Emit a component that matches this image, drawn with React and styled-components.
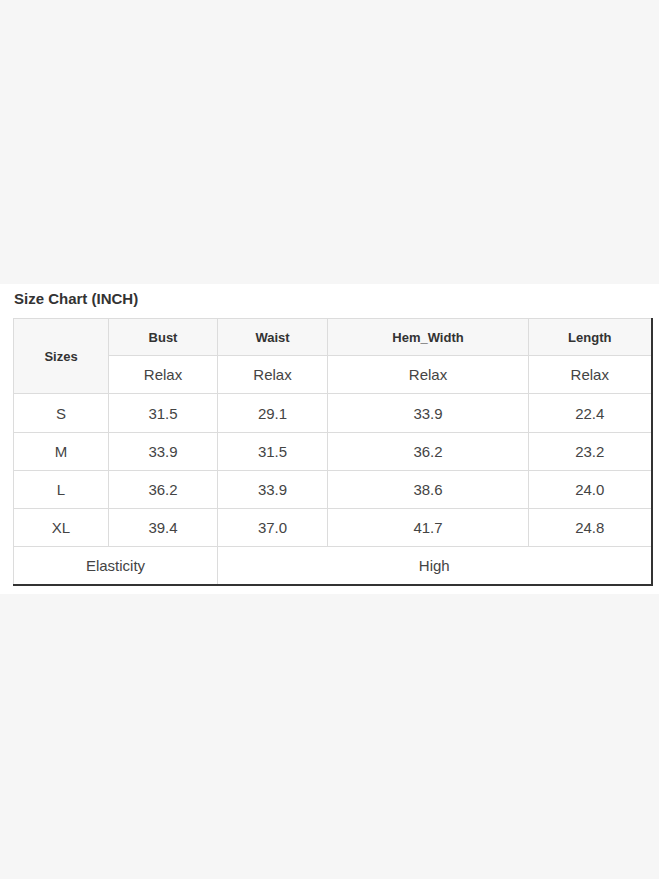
import React from "react";
import styled, { createGlobalStyle } from "styled-components";

const Global = createGlobalStyle`
  html, body { margin: 0; padding: 0; background: #f6f6f6; }
  body { font-family: "Liberation Sans", Arial, sans-serif; }
`;

const Page = styled.div`
  height: 879px;
  display: flex;
  flex-direction: column;
  padding-top: 284px;
  box-sizing: border-box;
`;

const Panel = styled.section`
  background: #fff;
  height: 310px;
  box-sizing: border-box;
  padding: 5px 0 0 13px;
`;

const Title = styled.h2`
  margin: 0 0 10px 1px;
  font-size: 15px;
  line-height: 19px;
  font-weight: bold;
  color: #333;
`;

const Table = styled.table`
  border-collapse: collapse;
  table-layout: fixed;
  width: 638px;
  border-right: 2px solid #333;
  border-bottom: 2px solid #333;
  color: #444;
`;

const Cell = styled.td`
  border: 1px solid #dcdcdc;
  text-align: center;
  padding: 0;
  height: ${(p) => p.$h || 38}px;
  font-size: ${(p) => (p.$head ? 13 : 15)}px;
  font-weight: ${(p) => (p.$head ? "bold" : "normal")};
  color: ${(p) => (p.$head ? "#333" : "#444")};
  background: ${(p) => (p.$shade ? "#f7f7f7" : "#fff")};
  box-sizing: border-box;
`;

const widths = [95, 109, 110, 201, 123];
const cols = ["Bust", "Waist", "Hem_Width", "Length"];
const rows = [
  ["S", "31.5", "29.1", "33.9", "22.4"],
  ["M", "33.9", "31.5", "36.2", "23.2"],
  ["L", "36.2", "33.9", "38.6", "24.0"],
  ["XL", "39.4", "37.0", "41.7", "24.8"],
];

export default function App() {
  return (
    <Page>
      <Global />
      <Panel>
        <Title>Size Chart (INCH)</Title>
        <Table>
          <colgroup>
            {widths.map((w, i) => (
              <col key={i} style={{ width: w }} />
            ))}
          </colgroup>
          <tbody>
            <tr>
              <Cell as="th" rowSpan={2} $head $shade>
                Sizes
              </Cell>
              {cols.map((c) => (
                <Cell as="th" key={c} $head $shade $h={37}>
                  {c}
                </Cell>
              ))}
            </tr>
            <tr>
              {cols.map((c) => (
                <Cell key={c}>Relax</Cell>
              ))}
            </tr>
            {rows.map((r, ri) => (
              <tr key={r[0]}>
                {r.map((v, i) => (
                  <Cell key={i} $h={ri === 0 ? 39 : 38}>
                    {v}
                  </Cell>
                ))}
              </tr>
            ))}
            <tr>
              <Cell colSpan={2}>Elasticity</Cell>
              <Cell colSpan={3}>High</Cell>
            </tr>
          </tbody>
        </Table>
      </Panel>
    </Page>
  );
}
